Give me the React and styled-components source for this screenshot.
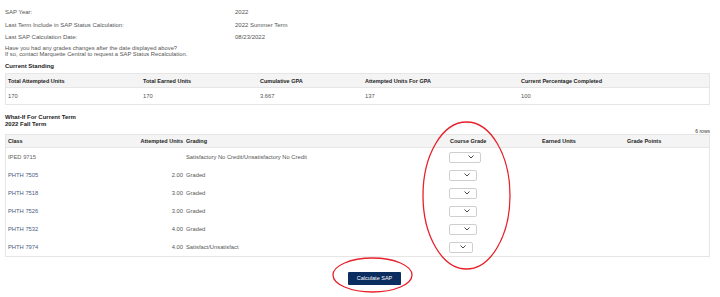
import React from 'react'
import styled, { createGlobalStyle } from 'styled-components'

const GlobalStyle = createGlobalStyle`
	html, body { margin: 0; padding: 0; background: #fff; }
	body { font-family: "Liberation Sans", Arial, sans-serif; color: #555; }
`

const Page = styled.div`
	position: relative;
	width: 720px;
	height: 297px;
	padding: 6px 10px 0 5px;
	box-sizing: border-box;
	overflow: hidden;
`

const InfoGrid = styled.div`
	display: grid;
	grid-template-columns: 230px 1fr;
	grid-auto-rows: 12.5px;
	align-items: center;
	font-size: 6px;
	color: #555;
`

const Note = styled.div`
	margin-top: 2.75px;
	font-size: 5.8px;
	line-height: 5.5px;
	color: #555;
`

const SectionTitle = styled.div`
	margin-top: ${p => p.$top}px;
	font-size: 6px;
	line-height: 7px;
	font-weight: bold;
	color: #222;
`

const Table = styled.div`
	margin-top: ${p => p.$top || 0}px;
	border: 1px solid #e6e6e6;
	width: 705px;
	box-sizing: border-box;
`

const Row = styled.div`
	display: grid;
	grid-template-columns: ${p => p.$cols};
	align-items: center;
	height: ${p => p.$h}px;
	background: ${p => p.$head ? '#f4f4f4' : '#fff'};
	border-bottom: ${p => p.$head ? '1px solid #e6e6e6' : 'none'};
	font-size: ${p => p.$head ? '5.5px' : '5.8px'};
	font-weight: ${p => p.$head ? 'bold' : 'normal'};
	color: ${p => p.$head ? '#222' : '#555'};
`

const Cell = styled.div`
	padding-left: ${p => p.$pl ?? 2}px;
	text-align: ${p => p.$right ? 'right' : 'left'};
	white-space: nowrap;
	color: ${p => p.$color || 'inherit'};
`

const RowCount = styled.div`
	width: 705px;
	margin-top: 1px;
	text-align: right;
	font-size: 5px;
	line-height: 5px;
	color: #333;
`

const SelectBox = styled.div`
	width: ${p => p.$w}px;
	height: 11px;
	box-sizing: border-box;
	border: 1px solid #cfcfcf;
	border-radius: 2px;
	background: #fff;
	display: flex;
	align-items: center;
	justify-content: flex-end;
	padding-right: 6px;
`

const ButtonRow = styled.div`
	margin-top: 9px;
	padding-left: 343px;
`

const Button = styled.button`
	width: 53px;
	height: 13px;
	padding: 0;
	border: none;
	border-radius: 1px;
	background: #0c2d5f;
	color: #fff;
	font-family: "Liberation Sans", Arial, sans-serif;
	font-size: 5.5px;
`

const Marks = styled.svg`
	position: absolute;
	left: 0;
	top: 0;
	pointer-events: none;
`

const Chevron = () => (
	<svg width="6" height="4" viewBox="0 0 6 4">
		<polyline points="0.5,0.5 3,3 5.5,0.5" fill="none" stroke="#333" strokeWidth="0.9" />
	</svg>
)

const standCols = '135px 117px 105px 156px 1fr'
const termCols = '105px 72px 266px 91px 85px 1fr'

const standing = ['Total Attempted Units', 'Total Earned Units', 'Cumulative GPA', 'Attempted Units For GPA', 'Current Percentage Completed']
const standingValues = ['170', '170', '3.667', '137', '100']

const classes = [
	{ code: 'IPED 9715', units: '', grading: 'Satisfactory No Credit/Unsatisfactory No Credit', w: 32, color: '#666' },
	{ code: 'PHTH 7505', units: '2.00', grading: 'Graded', w: 28, color: '#4b5d80' },
	{ code: 'PHTH 7518', units: '3.00', grading: 'Graded', w: 28, color: '#4b5d80' },
	{ code: 'PHTH 7526', units: '3.00', grading: 'Graded', w: 28, color: '#4b5d80' },
	{ code: 'PHTH 7532', units: '4.00', grading: 'Graded', w: 28, color: '#4b5d80' },
	{ code: 'PHTH 7974', units: '4.00', grading: 'Satisfact/Unsatisfact', w: 24, color: '#4b5d80' },
]

export default function App() {
	return (
		<Page>
			<GlobalStyle />
			<InfoGrid>
				<span>SAP Year:</span><span>2022</span>
				<span>Last Term Include in SAP Status Calculation:</span><span>2022 Summer Term</span>
				<span>Last SAP Calculation Date:</span><span>08/23/2022</span>
			</InfoGrid>
			<Note>
				Have you had any grades changes after the date displayed above?<br />
				If so, contact Marquette Central to request a SAP Status Recalculation.
			</Note>
			<SectionTitle $top={5.25}>Current Standing</SectionTitle>
			<Table $top={3.5}>
				<Row $head $cols={standCols} $h={13}>
					{standing.map(h => <Cell key={h}>{h}</Cell>)}
				</Row>
				<Row $cols={standCols} $h={16}>
					{standingValues.map((v, i) => <Cell key={i}>{v}</Cell>)}
				</Row>
			</Table>
			<SectionTitle $top={8.5}>What-If For Current Term<br />2022 Fall Term</SectionTitle>
			<RowCount>6 rows</RowCount>
			<Table $top={0.5}>
				<Row $head $cols={termCols} $h={12}>
					<Cell>Class</Cell>
					<Cell $right $pl={0}>Attempted Units</Cell>
					<Cell $pl={3}>Grading</Cell>
					<Cell $pl={1}>Course Grade</Cell>
					<Cell>Earned Units</Cell>
					<Cell>Grade Points</Cell>
				</Row>
				{classes.map(c => (
					<Row key={c.code} $cols={termCols} $h={18}>
						<Cell $color={c.color}>{c.code}</Cell>
						<Cell $right $pl={0}>{c.units}</Cell>
						<Cell $pl={3}>{c.grading}</Cell>
						<Cell $pl={0}><SelectBox $w={c.w}><Chevron /></SelectBox></Cell>
						<Cell />
						<Cell />
					</Row>
				))}
			</Table>
			<ButtonRow>
				<Button>Calculate SAP</Button>
			</ButtonRow>
			<Marks width="720" height="297" viewBox="0 0 720 297">
				<ellipse cx="466.5" cy="195.5" rx="43.5" ry="73.5" fill="none" stroke="#e8202a" strokeWidth="1.3" />
				<ellipse cx="372.5" cy="275" rx="39.5" ry="17" fill="none" stroke="#e8202a" strokeWidth="1.3" />
			</Marks>
		</Page>
	)
}
